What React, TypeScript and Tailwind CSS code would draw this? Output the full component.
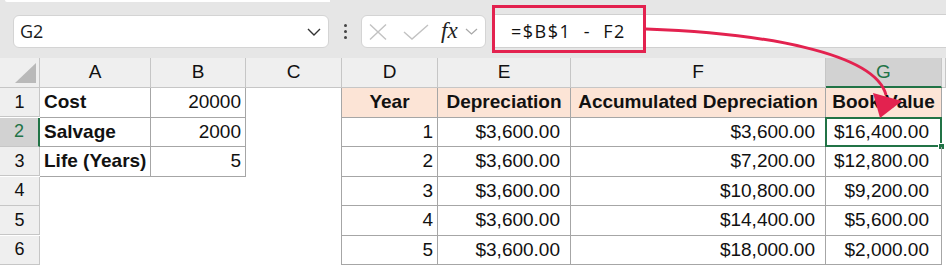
import React from "react";

const cols = ["A", "B", "C", "D", "E", "F", "G", ""];

type Row = {
	n: number;
	a?: string;
	b?: string;
	d?: string;
	e?: string;
	f?: string;
	g?: string;
};

const rows: Row[] = [
	{ n: 1, a: "Cost", b: "20000" },
	{ n: 2, a: "Salvage", b: "2000", d: "1", e: "$3,600.00", f: "$3,600.00", g: "$16,400.00" },
	{ n: 3, a: "Life (Years)", b: "5", d: "2", e: "$3,600.00", f: "$7,200.00", g: "$12,800.00" },
	{ n: 4, d: "3", e: "$3,600.00", f: "$10,800.00", g: "$9,200.00" },
	{ n: 5, d: "4", e: "$3,600.00", f: "$14,400.00", g: "$5,600.00" },
	{ n: 6, d: "5", e: "$3,600.00", f: "$18,000.00", g: "$2,000.00" },
];

const cell = "flex items-center h-full text-[19px] text-[#111] whitespace-nowrap";
const boxed = "border-r border-b border-[#a6a6a6]";
const peach = "bg-[#fce4d6] font-bold justify-center";

function Toolbar() {
	return (
		<div className="relative flex items-start h-[58px] bg-[#e6e6e6] pt-[15px] font-['Open_Sans',sans-serif]">
			<div className="absolute left-[5px] top-0 w-[325px] h-[2px] bg-white rounded-bl-md" />
			<div className="ml-[13px] w-[316px] h-[33px] bg-white border border-[#d4d4d4] rounded-md flex items-center pl-[6px] pr-[7px]">
				<span className="text-[18px] text-[#1a1a1a] flex-1">G2</span>
				<svg width="14" height="8" viewBox="0 0 14 8" className="text-[#333]">
					<path d="M1 1 L7 7 L13 1" fill="none" stroke="currentColor" strokeWidth="1.4" />
				</svg>
			</div>
			<div className="w-[32px] h-[33px] flex flex-col items-center justify-center gap-[3px]">
				<span className="w-[3px] h-[3px] rounded-full bg-[#444]" />
				<span className="w-[3px] h-[3px] rounded-full bg-[#444]" />
				<span className="w-[3px] h-[3px] rounded-full bg-[#444]" />
			</div>
			<div className="w-[125px] h-[33px] bg-white border border-[#d4d4d4] rounded-md flex items-center pl-[7px]">
				<svg width="18" height="16" viewBox="0 0 18 16" className="text-[#c2c2c2]">
					<path d="M1 0.5 L17 15.5 M17 0.5 L1 15.5" fill="none" stroke="currentColor" strokeWidth="1.4" />
				</svg>
				<svg width="26" height="16" viewBox="0 0 26 16" className="ml-[16px] text-[#c2c2c2]">
					<path d="M1 8 L9 15 L25 1" fill="none" stroke="currentColor" strokeWidth="1.4" />
				</svg>
				<span className="ml-[12px] font-['Liberation_Serif',serif] italic text-[23px] leading-none text-[#222] -mt-[2px]">
					fx
				</span>
				<svg width="13" height="7" viewBox="0 0 13 7" className="ml-[7px] text-[#a8a8a8]">
					<path d="M1 1 L6.5 6 L12 1" fill="none" stroke="currentColor" strokeWidth="1.2" />
				</svg>
			</div>
			<div className="relative ml-[7px] flex-1 h-[34px] -mt-[1px] bg-white border-y border-[#d0d0d0] flex items-center pl-[18px]">
				<span className="text-[18px] tracking-[1.5px] text-[#111] whitespace-pre">
					=$B$1  -  F2
				</span>
				<div className="absolute -left-[1px] -top-[10px] w-[154px] h-[48px] border-[3px] border-[#e3224f]" />
			</div>
		</div>
	);
}

function HeaderRow() {
	return (
		<>
			<div className="relative h-[30px] bg-[#efefef] border-r border-b border-[#c6c6c6]">
				<div className="absolute left-[15px] top-[5px] w-[21px] h-[20px] bg-[#b9b9b9] [clip-path:polygon(100%_0,100%_100%,0_100%)]" />
			</div>
			{cols.map((c, i) =>
				c === "G" ? (
					<div
						key={i}
						className="h-[30px] bg-[#d2d2d2] border-r border-[#c6c6c6] border-b-2 border-b-[#217346] flex items-center justify-center text-[19px] text-[#217346]"
					>
						{c}
					</div>
				) : (
					<div
						key={i}
						className="h-[30px] bg-[#efefef] border-r border-b border-[#c6c6c6] flex items-center justify-center text-[19px] text-[#111]"
					>
						{c}
					</div>
				),
			)}
		</>
	);
}

function DataRow({ r }: { r: Row }) {
	const first = r.n === 1;
	const inAB = r.n <= 3;
	const sel = r.n === 2;
	return (
		<>
			{sel ? (
				<div className="h-[29px] bg-[#d2d2d2] border-b border-[#c6c6c6] border-r-2 border-r-[#217346] flex items-center justify-center text-[18px] text-[#217346]">
					{r.n}
				</div>
			) : (
				<div className="h-[29px] bg-[#efefef] border-r border-b border-[#c6c6c6] flex items-center justify-center text-[18px] text-[#111]">
					{r.n}
				</div>
			)}
			<div className={`${cell} ${inAB ? boxed : ""} font-bold pl-[4px]`}>{r.a}</div>
			<div className={`${cell} ${inAB ? boxed : ""} justify-end pr-[4px]`}>{r.b}</div>
			<div className={`${cell} border-r border-[#a6a6a6]`} />
			<div className={`${cell} ${boxed} ${first ? peach : "justify-end pr-[4px]"}`}>
				{first ? "Year" : r.d}
			</div>
			<div className={`${cell} ${boxed} ${first ? peach : "justify-end pr-[10px]"}`}>
				{first ? "Depreciation" : r.e}
			</div>
			<div className={`${cell} ${boxed} ${first ? peach : "justify-end pr-[10px]"}`}>
				{first ? "Accumulated Depreciation" : r.f}
			</div>
			<div className={`relative ${cell} ${boxed} ${first ? peach : "justify-end pr-[12px]"}`}>
				{first ? "Book Value" : r.g}
				{sel && (
					<>
						<div className="absolute -left-[1px] -top-[1px] -right-[1px] -bottom-[1px] border-2 border-[#217346]" />
						<div className="absolute -right-[4px] -bottom-[4px] w-[7px] h-[7px] bg-[#217346] border border-white" />
					</>
				)}
			</div>
			<div className={cell} />
		</>
	);
}

export default function App() {
	return (
		<div className="relative w-[946px] h-[265px] overflow-hidden bg-white font-['Liberation_Sans',Arial,sans-serif]">
			<Toolbar />
			<div className="grid grid-cols-[40px_111px_95px_96px_96px_133px_255px_116px_1fr]">
				<HeaderRow />
				{rows.map((r) => (
					<DataRow key={r.n} r={r} />
				))}
				<div className="h-[29px] bg-[#efefef] border-r border-[#c6c6c6]" />
			</div>
			<svg
				className="absolute left-0 top-0 pointer-events-none"
				width="946"
				height="265"
				viewBox="0 0 946 265"
			>
				<path
					d="M646 29 C 760 33, 875 52, 886 95"
					fill="none"
					stroke="#e3224f"
					strokeWidth="3"
				/>
				<polygon points="873,93 902,101 880,118" fill="#e3224f" />
			</svg>
		</div>
	);
}
